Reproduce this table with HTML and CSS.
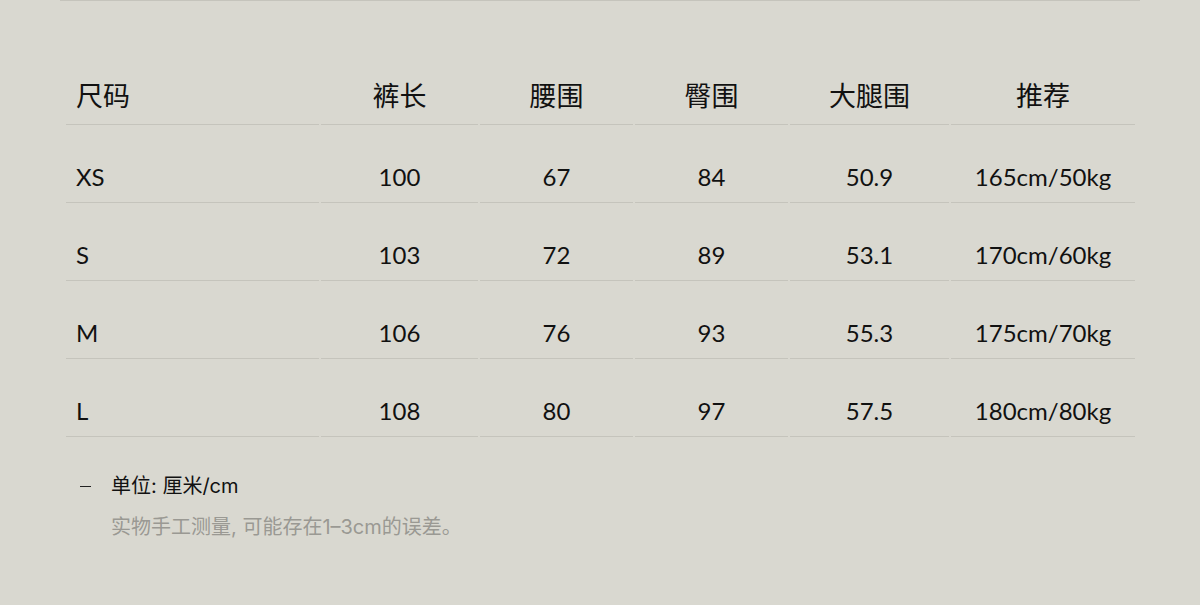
FILE: index.html
```html
<!DOCTYPE html>
<html lang="zh-CN">
<head>
<meta charset="utf-8">
<title>尺码表</title>
<link rel="stylesheet" href="styles.css">
</head>
<body>
<section class="size-guide">
  <div class="size-table">
    <div class="cell head first">尺码</div>
    <div class="cell head">裤长</div>
    <div class="cell head">腰围</div>
    <div class="cell head">臀围</div>
    <div class="cell head">大腿围</div>
    <div class="cell head">推荐</div>

    <div class="cell first">XS</div>
    <div class="cell">100</div>
    <div class="cell">67</div>
    <div class="cell">84</div>
    <div class="cell">50.9</div>
    <div class="cell">165cm/50kg</div>

    <div class="cell first">S</div>
    <div class="cell">103</div>
    <div class="cell">72</div>
    <div class="cell">89</div>
    <div class="cell">53.1</div>
    <div class="cell">170cm/60kg</div>

    <div class="cell first">M</div>
    <div class="cell">106</div>
    <div class="cell">76</div>
    <div class="cell">93</div>
    <div class="cell">55.3</div>
    <div class="cell">175cm/70kg</div>

    <div class="cell first">L</div>
    <div class="cell">108</div>
    <div class="cell">80</div>
    <div class="cell">97</div>
    <div class="cell">57.5</div>
    <div class="cell">180cm/80kg</div>
  </div>

  <ul class="notes">
    <li class="note">
      <span class="dash"></span>
      <div class="note-body">
        <p class="note-title">单位: 厘米/cm</p>
        <p class="note-sub">实物手工测量, 可能存在1–3cm的误差。</p>
      </div>
    </li>
  </ul>
</section>
</body>
</html>
```

FILE: styles.css
```css
html, body {
  margin: 0;
  padding: 0;
  background: #d9d8d0;
}

body {
  width: 1200px;
  height: 605px;
  overflow: hidden;
  color: #111;
}

.size-guide {
  width: 1080px;
  margin: 0 auto;
  border-top: 1px solid #c5c4bc;
}

.size-table {
  display: grid;
  grid-template-columns: 253px 157px 153px 153px 159px 184px;
  column-gap: 2px;
  margin: 56px 5px 0 6px;
  font-family: "Lato", "Noto Sans CJK SC", sans-serif;
}

.cell {
  border-bottom: 1px solid #c5c4bc;
  text-align: center;
  font-size: 24px;
  line-height: 30px;
  padding: 37px 10px 10px;
  white-space: nowrap;
}

.cell.head {
  font-family: "Noto Sans CJK SC", sans-serif;
  font-size: 27px;
  line-height: 36px;
  padding: 20px 10px 11px;
}

.cell.first {
  text-align: left;
}

.notes {
  list-style: none;
  margin: 35px 0 0 20px;
  padding: 0;
  font-family: "Inter", "Noto Sans CJK SC", sans-serif;
  font-size: 20px;
}

.note {
  display: flex;
  align-items: flex-start;
}

.dash {
  width: 11px;
  height: 1px;
  background: #222;
  margin: 14px 20px 0 0;
  flex: none;
}

.note-body p {
  margin: 0;
  line-height: 28px;
}

.note-title {
  color: #111;
}

.note-sub {
  margin-top: 13px !important;
  color: #9a9993;
}
```
